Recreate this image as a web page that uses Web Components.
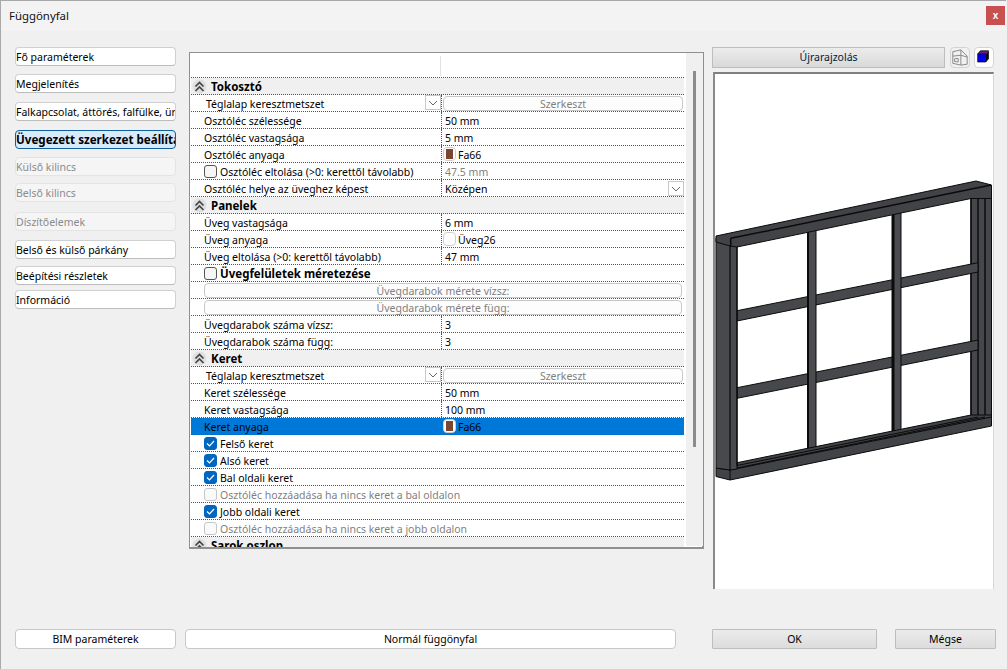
<!DOCTYPE html>
<html lang="hu">
<head>
<meta charset="utf-8">
<title>Függönyfal</title>
<style>
html,body{margin:0;padding:0;height:100%;background:#f0f0f0}
body{font:10.5px/1 "Noto Sans","Liberation Sans",sans-serif;color:#000;overflow:hidden}
</style>
</head>
<body>
<fg-dialog>
  <span slot="title">Függönyfal</span>
  <fg-nav slot="nav" style="--top:0">Fő paraméterek</fg-nav>
  <fg-nav slot="nav" style="--top:8px">Megjelenítés</fg-nav>
  <fg-nav slot="nav" style="--top:9px">Falkapcsolat, áttörés, falfülke, ür</fg-nav>
  <fg-nav slot="nav" style="--top:9px" active>Üvegezett szerkezet beállítása</fg-nav>
  <fg-nav slot="nav" style="--top:8px" disabled>Külső kilincs</fg-nav>
  <fg-nav slot="nav" style="--top:7px" disabled>Belső kilincs</fg-nav>
  <fg-nav slot="nav" style="--top:10px" disabled>Díszítőelemek</fg-nav>
  <fg-nav slot="nav" style="--top:9px">Belső és külső párkány</fg-nav>
  <fg-nav slot="nav" style="--top:7px">Beépítési részletek</fg-nav>
  <fg-nav slot="nav" style="--top:5px">Információ</fg-nav>

  <fg-panel slot="panel">
    <fg-section>Tokosztó</fg-section>
    <fg-row indent="2" combo>Téglalap keresztmetszet<fg-btn slot="value" disabled>Szerkeszt</fg-btn></fg-row>
    <fg-row>Osztóléc szélessége<span slot="value">50 mm</span></fg-row>
    <fg-row>Osztóléc vastagsága<span slot="value">5 mm</span></fg-row>
    <fg-row>Osztóléc anyaga<fg-swatch slot="value" color="#7a4630">Fa66</fg-swatch></fg-row>
    <fg-row><fg-check>Osztóléc eltolása (&gt;0: kerettől távolabb)</fg-check><span slot="value" style="color:#808080">47.5 mm</span></fg-row>
    <fg-row>Osztóléc helye az üveghez képest<fg-combo slot="value">Középen</fg-combo></fg-row>
    <fg-section>Panelek</fg-section>
    <fg-row>Üveg vastagsága<span slot="value">6 mm</span></fg-row>
    <fg-row>Üveg anyaga<fg-swatch slot="value">Üveg26</fg-swatch></fg-row>
    <fg-row>Üveg eltolása (&gt;0: kerettől távolabb)<span slot="value">47 mm</span></fg-row>
    <fg-row wide><fg-check bold>Üvegfelületek méretezése</fg-check></fg-row>
    <fg-row wide><fg-btn disabled>Üvegdarabok mérete vízsz:</fg-btn></fg-row>
    <fg-row wide><fg-btn disabled>Üvegdarabok mérete függ:</fg-btn></fg-row>
    <fg-row>Üvegdarabok száma vízsz:<span slot="value">3</span></fg-row>
    <fg-row>Üvegdarabok száma függ:<span slot="value">3</span></fg-row>
    <fg-section>Keret</fg-section>
    <fg-row indent="2" combo>Téglalap keresztmetszet<fg-btn slot="value" disabled>Szerkeszt</fg-btn></fg-row>
    <fg-row>Keret szélessége<span slot="value">50 mm</span></fg-row>
    <fg-row>Keret vastagsága<span slot="value">100 mm</span></fg-row>
    <fg-row selected>Keret anyaga<fg-swatch slot="value" color="#7a4630">Fa66</fg-swatch></fg-row>
    <fg-row wide><fg-check checked>Felső keret</fg-check></fg-row>
    <fg-row wide><fg-check checked>Alsó keret</fg-check></fg-row>
    <fg-row wide><fg-check checked>Bal oldali keret</fg-check></fg-row>
    <fg-row wide><fg-check disabled>Osztóléc hozzáadása ha nincs keret a bal oldalon</fg-check></fg-row>
    <fg-row wide><fg-check checked>Jobb oldali keret</fg-check></fg-row>
    <fg-row wide><fg-check disabled>Osztóléc hozzáadása ha nincs keret a jobb oldalon</fg-check></fg-row>
    <fg-section>Sarok oszlop</fg-section>
  </fg-panel>

  <fg-preview slot="preview"></fg-preview>

  <fg-btn slot="foot" style="width:161px;height:20px">BIM paraméterek</fg-btn>
  <fg-btn slot="foot" style="width:491px;height:20px;margin-left:9px">Normál függönyfal</fg-btn>
  <fg-btn slot="foot" flat style="width:165px;height:20px;margin-left:36px">OK</fg-btn>
  <fg-btn slot="foot" flat style="width:101px;height:20px;margin-left:18px">Mégse</fg-btn>
</fg-dialog>

<script>
function def(name, css, html, init){
  customElements.define(name, class extends HTMLElement{
    constructor(){super();this.attachShadow({mode:'open'}).innerHTML='<style>'+css+'</style>'+html;}
    connectedCallback(){ if(init) init(this); }
  });
}

def('fg-dialog',`
  :host{display:flex;flex-direction:column;box-sizing:border-box;width:1006px;height:669px;background:#f0f0f0;border-left:1px solid #a9a9a9;border-top:1px solid #a9a9a9;position:relative}
  .bar{height:30px;flex:none;background:#f3f3f3;display:flex;align-items:center;justify-content:space-between;padding:0 0 0 8px;font-size:11.4px;color:#111}
  .x{width:19px;height:19px;background:#c75050;color:#fff;font:bold 10px "Liberation Sans",sans-serif;display:flex;align-items:center;justify-content:center;margin:-1px 1px 0 0;padding-bottom:1px;box-sizing:border-box}
  .main{flex:1;min-height:0;display:flex;padding:16px 0 0 14px}
  .nav{width:161px;flex:none;display:flex;flex-direction:column}
  .panel{margin:5px 0 0 13px;width:515px;height:497px;flex:none;display:flex}
  .prev{margin:0 0 0 8px;width:282px;flex:none}
  .foot{flex:none;display:flex;padding:0 0 20px 14px}
`,`
  <div class="bar"><slot name="title"></slot><div class="x">x</div></div>
  <div class="main">
    <div class="nav"><slot name="nav"></slot></div>
    <div class="panel"><slot name="panel"></slot></div>
    <div class="prev"><slot name="preview"></slot></div>
  </div>
  <div class="foot"><slot name="foot"></slot></div>
`);

def('fg-nav',`
  :host{display:flex;align-items:center;box-sizing:border-box;height:19px;margin-top:var(--top,0);padding:1px 0 0;background:#fff;border:1px solid #d0d0d0;border-bottom-color:#bcbcbc;border-radius:4px;overflow:hidden;white-space:nowrap;color:#000}
  :host([active]){background:#d8ebfa;border:1px solid #0f5f9f;font-weight:700;font-size:11.6px}
  :host([disabled]){background:#f5f5f5;border-color:#e4e4e4;color:#8b8b8b}
`,`<slot></slot>`);

def('fg-btn',`
  :host{display:flex;align-items:center;justify-content:center;box-sizing:border-box;height:15px;background:#fff;border:1px solid #c8c8c8;border-radius:4px;white-space:nowrap;color:#000;flex:none}
  :host([disabled]){color:#7f7f7f;background:#fdfdfd}
  :host([flat]){background:linear-gradient(#ececec,#dcdcdc);border:1px solid #bdbdbd;border-radius:1px}
`,`<slot></slot>`);

def('fg-panel',`
  :host{display:flex;box-sizing:border-box;width:100%;height:100%;background:#fff;border:1px solid #8f8f8f;border-right-width:2px;border-bottom-width:2px}
  .t{width:494px;flex:none;overflow:hidden;padding-left:1px;box-sizing:border-box;display:flex;flex-direction:column}
  .head{height:25px;flex:none;display:grid;grid-template-columns:250px 1fr;border-bottom:1px dotted #555;box-sizing:border-box;padding:3px 0 1px}
  .head i{border-right:1px solid #e2e2e2}
  .s{width:17px;margin:0 1px 1px 2px;background:#f0f0f0;position:relative;flex:none;box-sizing:border-box}
  .s b{position:absolute;left:7px;top:18px;width:3px;height:376px;background:#8c8c8c}
`,`
  <div class="t"><div class="head"><i></i><span></span></div><slot></slot></div>
  <div class="s"><b></b></div>
`);

def('fg-section',`
  :host{display:flex;align-items:center;box-sizing:border-box;height:17px;flex:none;padding-top:1px;background:#f0f0f0;border-bottom:1px dotted #555;font-weight:700;font-size:11.5px;white-space:nowrap}
  .i{width:15px;height:15px;margin:-1px 4px 0 1px;flex:none;display:block}
`,`<svg class="i" viewBox="0 0 15 15"><circle cx="7.5" cy="7.5" r="7" fill="#e0e0e0"/><path d="M3.500 7.500l4-4 4 4M3.500 12l4-4 4 4" fill="none" stroke="#444" stroke-width="1.700"/></svg><slot></slot>`);

def('fg-row',`
  :host{display:grid;grid-template-columns:250px 1fr;box-sizing:border-box;height:17px;flex:none;border-bottom:1px dotted #555;white-space:nowrap;color:#000}
  :host([selected]){background:#0078d7}
  :host([wide]){grid-template-columns:1fr}
  .l{display:flex;align-items:center;box-sizing:border-box;height:16px;padding:2px 0 0 13px;min-width:0;position:relative}
  :host([indent]) .l{padding-left:15px}
  :host([wide]) .l{padding-right:2px}
  .l ::slotted(fg-btn){flex:1;padding-top:2px;margin-bottom:2px}
  .v{display:flex;align-items:center;box-sizing:border-box;height:16px;padding:2px 0 0 3px;border-left:1px dotted #555;min-width:0}
  :host([wide]) .v{display:none}
  :host([combo]) .v{padding-left:1px;padding-right:1px}
  .v ::slotted(fg-btn){flex:1;padding-top:2px;margin-bottom:2px}
  .c{display:none;position:absolute;right:0;top:0;width:16px;height:15px;box-sizing:border-box;border:1px solid #c8c8c8;background:#fff}
  :host([combo]) .c{display:block}
  .c svg{display:block;margin:3px 0 0 2px}
`,`<div class="l"><slot></slot><div class="c"><svg width="10" height="8" viewBox="0 0 10 8"><path d="M1 2l4 4 4-4" fill="none" stroke="#666"/></svg></div></div><div class="v"><slot name="value"></slot></div>`);

def('fg-combo',`
  :host{display:flex;flex:1;align-items:center;justify-content:space-between}
  .c{width:16px;height:15px;box-sizing:border-box;border:1px solid #c8c8c8;background:#fff;flex:none;margin-bottom:2px}
  svg{display:block;margin:3px 0 0 2px}
`,`<slot></slot><div class="c"><svg width="10" height="8" viewBox="0 0 10 8"><path d="M1 2l4 4 4-4" fill="none" stroke="#666"/></svg></div>`);

def('fg-swatch',`
  :host{display:flex;align-items:center}
  .b{width:13px;height:14px;box-sizing:border-box;border:1px solid #cfcfcf;border-radius:4px;background:#fff;margin:0 2px 2px -2px;display:flex;align-items:center;justify-content:center}
  .b i{width:7px;height:10px;display:block}
`,`<span class="b"><i></i></span><slot></slot>`,el=>{
  const c=el.getAttribute('color'); if(c) el.shadowRoot.querySelector('i').style.background=c;
});

def('fg-check',`
  :host{display:flex;align-items:center}
  .b{width:13px;height:13px;box-sizing:border-box;border:1px solid #555;border-radius:3px;background:#f6f6f6;margin:0 3px 2px 0;flex:none;display:block}
  :host([checked]) .b{background:#0067c0;border-color:#0067c0}
  svg{display:none;width:11px;height:11px}
  :host([checked]) svg{display:block}
  :host([disabled]){color:#7f7f7f}
  :host([disabled]) .b{border-color:#c6c6c6;background:#fafafa}
  :host([bold]){font-weight:700;font-size:11.5px}
`,`<span class="b"><svg viewBox="0 0 11 11"><path d="M2 5.500l2.500 2.500 4.500-5" fill="none" stroke="#fff" stroke-width="1.200"/></svg></span><slot></slot>`);

def('fg-preview',`
  :host{display:flex;flex-direction:column}
  .top{display:flex;height:21px;flex:none}
  .redo{width:234px;box-sizing:border-box;background:linear-gradient(#ececec,#d9d9d9);border:1px solid #bdbdbd;display:flex;align-items:center;justify-content:center;color:#001a40}
  .ib{width:20px;height:21px;box-sizing:border-box;margin-left:4px;border:1px solid #d4d4d4;border-radius:4px;background:#fff;display:block}
  .ib.a{margin-left:5px;background:#f1f1f1}
  .box{margin:4px 0 0 1px;width:281px;height:517px;box-sizing:border-box;background:#fff;border-top:2px solid #7f7f7f;border-left:2px solid #8a8a8a;border-right:1px solid #d6d6d6;flex:none}
  .box svg{display:block}
`,`
  <div class="top">
    <div class="redo">Újrarajzolás</div>
    <svg class="ib a" viewBox="0 0 20 21"><path d="M2 4l9-2 7 7v9l-7 1-9-2zM2 9l9-1M11 2v6l7 2M11 8v11M4 12l4-.500v4l-4-.500z" fill="none" stroke="#8a8a8a" stroke-width="1.100"/></svg>
    <svg class="ib" viewBox="0 0 20 21"><path d="M3 6.500l3-3.500h9l-3 3.500z" fill="#6a1a7a"/><path d="M3 6.500h9v9H3z" fill="#0000ee"/><path d="M12 6.500l3-3.500v9l-3 3.500z" fill="#0a0a0a"/><path d="M3 6.500l3-3.500h9v9l-3 3.500H3zM3 6.500h9v9" fill="none" stroke="#000" stroke-width=".8"/></svg>
  </div>
  <div class="box">
    <svg width="278" height="515" viewBox="715 74 278 515">
      <g stroke="#0b0b0b" stroke-width="1" stroke-linejoin="round">
        <path d="M971 198h20.500v222H971z" fill="#45474b"/>
        <path d="M978 196v224" fill="none" stroke-width="1.500"/>
        <path d="M985 190v226" fill="none" stroke-width="1.500"/>
        <path d="M971 198v218" fill="none" stroke-width="1.500"/>
        <path d="M737 310.700L978 262.700V272L737 321z" fill="#46484c"/>
        <path d="M737 387.700L978 340V350L737 398.300z" fill="#46484c"/>
        <path d="M808 231v220h8V229z" fill="#4a4c50"/>
        <path d="M893 214v219h8V212z" fill="#4a4c50"/>
        <path d="M808 231v220" fill="none" stroke-width="2"/>
        <path d="M893 214v219" fill="none" stroke-width="3"/>
        <path d="M737 462.700L971 415h20.500V426L730 480l-14-3.500V468l21-2z" fill="#414347"/>
        <path d="M737 465.500L978 417M737 468L985 417M730 470L991.500 417M730 470v10M716 468l14 2" fill="none"/>
        <path d="M716 238h21v231l-7 1-14-2z" fill="#47494d"/>
        <path d="M730 240v230M737 247v219" fill="none" stroke-width="1.200"/>
        <path d="M716 236L976 181l15.500 4v13.500h-20.500L737 247l-7-1-14-4z" fill="#414347"/>
        <path d="M730.700 238.300L991 185M730.700 238.300V247" fill="none" stroke-width="1.500"/>
      </g>
    </svg>
  </div>
`);
</script>
</body>
</html>
